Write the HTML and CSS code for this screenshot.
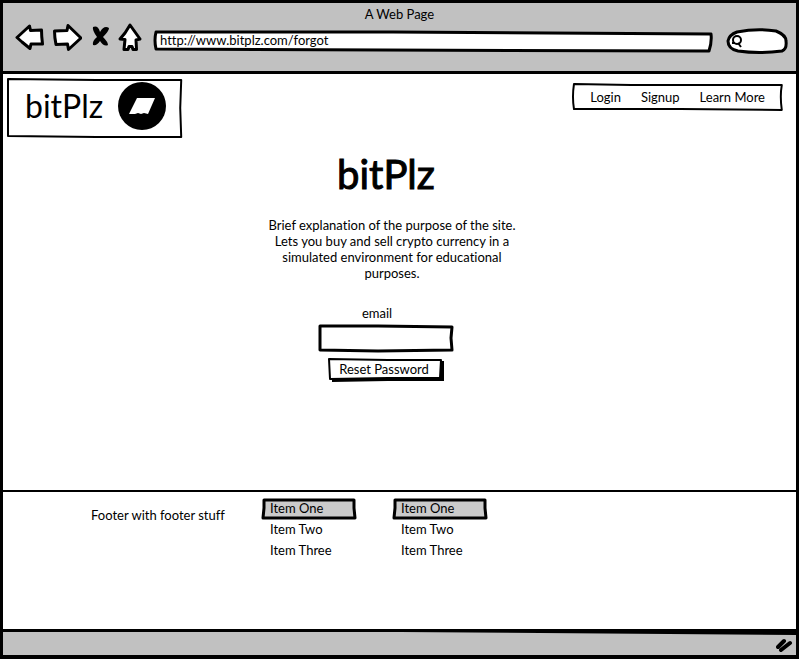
FILE: index.html
```html
<!DOCTYPE html>
<html lang="en">
<head>
<meta charset="utf-8">
<title>A Web Page</title>
<link rel="stylesheet" href="styles.css">
</head>
<body>
<div class="window">
  <header class="chrome">
    <div class="chrome-title">A Web Page</div>
    <div class="toolbar">
      <button class="icon back" type="button" aria-label="Back">
        <svg width="30" height="30" viewBox="0 0 30 30"><path class="shape" d="M2 15.500 L14.500 4 L15.500 8.500 L26.500 8 Q26.500 14 27.500 22 L16 22 L15 26.500 L7 20 Z"/></svg>
      </button>
      <button class="icon forward" type="button" aria-label="Forward">
        <svg width="30" height="30" viewBox="0 0 30 30"><path class="shape" d="M2.500 9 L15 8.500 L16 3.500 L29 16 L16.500 27.500 L15.500 22 L4 22.500 Q2.500 15 2.500 9 Z"/></svg>
      </button>
      <button class="icon stop" type="button" aria-label="Stop">
        <svg width="20" height="30" viewBox="0 0 20 30"><path d="M2 5 Q7 3 9 10 Q13 3 18 6 Q18 9 12 15 Q17 20 17 23 Q13 25 9 19 Q6 24 2 23 Q1 19 6 15 Q1 8 2 5 Z"/></svg>
      </button>
      <button class="icon home" type="button" aria-label="Home">
        <svg width="24" height="30" viewBox="0 0 24 30"><path class="shape" d="M12 3 L22 17 L18 18 L18.500 27.500 L15 27.500 L14 24.500 L11 24.500 L10 27.500 L6 27.500 L7 17.500 L2 17 L7 11 Z"/></svg>
      </button>
      <div class="sketch address">
        <svg class="outline" viewBox="0 0 560 22" preserveAspectRatio="none" aria-hidden="true"><path d="M3 2 L240 2 L558 4 Q559 12 556 21 L230 20 L3 19 Q1 10 3 2 Z"/></svg>
        <input type="text" aria-label="Address" value="http://www.bitplz.com/forgot">
      </div>
      <div class="sketch search">
        <svg class="outline" viewBox="0 0 60 26" preserveAspectRatio="none" aria-hidden="true"><path d="M10 4 Q30 0 49 3 Q59 7 59 13 Q60 21 55 23 Q32 26 11 23 Q1 21 1 13 Q2 7 10 4 Z"/></svg>
        <svg class="lens" width="12" height="14" viewBox="0 0 12 14" aria-hidden="true"><circle cx="7" cy="6" r="4"/><path d="M2 9 L5 9 M8 9 L11 13"/></svg>
        <input type="search" aria-label="Search">
      </div>
    </div>
  </header>

  <div class="site-header">
    <a class="sketch brand" href="#">
      <svg class="outline thin" viewBox="0 0 176 60" preserveAspectRatio="none" aria-hidden="true"><path d="M1 1 L90 2 L175 2 L174 30 L175 59 L90 59 L1 58 L1 30 Z"/></svg>
      <span>bitPlz</span>
      <svg class="mark" width="48" height="48" viewBox="0 0 48 48" aria-hidden="true"><circle cx="24" cy="24" r="24"/><path d="M19 16 L37 16 L30 32 L26 31 L23 32 L20 31 L17 32 L11 32 Z"/></svg>
    </a>
    <nav class="sketch menu">
      <svg class="outline thin" viewBox="0 0 214 28" preserveAspectRatio="none" aria-hidden="true"><path d="M2 1 L60 2 L213 2 Q211 13 213 27 L110 26 L2 26 Q0 14 2 1 Z"/></svg>
      <a href="#">Login</a>
      <a href="#">Signup</a>
      <a href="#">Learn More</a>
    </nav>
  </div>

  <main>
    <h1>bitPlz</h1>
    <p class="intro">Brief explanation of the purpose of the site. Lets you buy and sell crypto currency in a simulated environment for educational purposes.</p>
    <form>
      <label for="email">email</label>
      <div class="sketch field">
        <svg class="outline" viewBox="0 0 136 28" preserveAspectRatio="none" aria-hidden="true"><path d="M2 2 L60 2 L134 3 L133 14 L134 26 L60 27 L2 26 Z"/></svg>
        <input id="email" type="text">
      </div>
      <button class="sketch reset" type="submit">
        <svg class="outline thin" viewBox="0 0 116 24" preserveAspectRatio="none" aria-hidden="true"><path class="shadow" d="M4 20 L112 20 L112 3 L116 3 L116 23 L60 23 L4 24 Z"/><path d="M1 1 L60 2 L113 2 L112 20 L60 20 L2 21 Z"/></svg>
        <span>Reset Password</span>
      </button>
    </form>
  </main>

  <footer>
    <p>Footer with footer stuff</p>
    <ul>
      <li class="sketch current">
        <svg class="outline" viewBox="0 0 94 21" preserveAspectRatio="none" aria-hidden="true"><path d="M2 2 L50 2 L92 2 L92 10 L93 20 L50 20 L1 20 L2 10 Z"/></svg>
        <a href="#">Item One</a></li>
      <li><a href="#">Item Two</a></li>
      <li><a href="#">Item Three</a></li>
    </ul>
    <ul>
      <li class="sketch current">
        <svg class="outline" viewBox="0 0 94 21" preserveAspectRatio="none" aria-hidden="true"><path d="M2 2 L50 2 L92 2 L92 10 L93 20 L50 20 L1 20 L2 10 Z"/></svg>
        <a href="#">Item One</a></li>
      <li><a href="#">Item Two</a></li>
      <li><a href="#">Item Three</a></li>
    </ul>
  </footer>

  <div class="status">
    <svg class="wedge" viewBox="0 0 100 3" preserveAspectRatio="none" aria-hidden="true"><path d="M0 0 L100 0 L100 3 Z"/></svg>
    <svg class="grip" width="18" height="16" viewBox="0 0 18 16" aria-hidden="true"><path d="M2 9 L8 3 M5 12 L14 5"/></svg>
  </div>
</div>
</body>
</html>
```
FILE: styles.css
```css
* {
  box-sizing: border-box;
}

body {
  margin: 0;
  background: #fff;
  color: #000;
  font: 13px/16px Lato, "Liberation Sans", sans-serif;
  font-variant-ligatures: none;
}

a {
  color: inherit;
  text-decoration: none;
}

input,
button {
  border: 0;
  padding: 0;
  background: none;
  color: inherit;
  font: inherit;
  outline: 0;
}

.window {
  display: flex;
  flex-direction: column;
  min-height: 100vh;
  border: solid #000;
  border-width: 3px 3px 4px;
}

/* Hand-drawn outlines stretch with the box that they surround. */
.sketch {
  position: relative;
}

.sketch > * {
  position: relative;
}

.sketch > .outline {
  position: absolute;
  inset: 0;
  width: 100%;
  height: 100%;
  overflow: visible;
  fill: #fff;
  stroke: #000;
  stroke-width: 3px;
  stroke-linejoin: round;
}

.sketch > .thin {
  stroke-width: 2px;
}

.chrome {
  padding-top: 3px;
  height: 71px;
  background: #c1c1c1;
  border-bottom: 3px solid #000;
}

.chrome-title {
  text-align: center;
}

.toolbar {
  display: flex;
  align-items: flex-start;
  padding: 0 9px 0 12px;
}

.icon {
  display: flex;
}

.forward {
  margin-left: 7px;
}

.stop {
  margin-left: 9px;
}

.home {
  margin-left: 7px;
}

.shape {
  fill: #fff;
  stroke: #000;
  stroke-width: 3px;
  stroke-linejoin: round;
}

.address {
  flex: 1;
  height: 22px;
  margin: 8px 14px 0 11px;
}

.address input {
  display: block;
  width: 100%;
  height: 20px;
  padding-left: 7px;
}

.search {
  display: flex;
  align-items: center;
  width: 60px;
  height: 26px;
  margin-top: 6px;
  padding-left: 3px;
}

.search input {
  flex: 1;
  min-width: 0;
}

.lens {
  fill: none;
  stroke: #000;
  stroke-width: 2px;
}

.site-header {
  display: flex;
  justify-content: space-between;
  align-items: flex-start;
  padding: 4px 13px 0 4px;
}

.brand {
  display: flex;
  align-items: center;
  gap: 15px;
  height: 60px;
  padding: 0 16px 4px 18px;
  font-size: 32px;
}

.mark path {
  fill: #fff;
}

.menu {
  display: flex;
  gap: 20px;
  height: 28px;
  margin-top: 5px;
  padding: 6px 18px;
}

main {
  flex: 1;
  display: flex;
  flex-direction: column;
  align-items: center;
  padding: 12px 27px 0 0;
}

h1 {
  margin: 0;
  font-size: 40px;
  line-height: 48px;
  font-weight: 400;
  -webkit-text-stroke: 1px #000;
}

.intro {
  width: 260px;
  margin: 19px 0 24px 12px;
  text-align: center;
}

form {
  display: flex;
  flex-direction: column;
  align-items: center;
}

label {
  margin-right: 18px;
}

.field {
  width: 136px;
  height: 28px;
  margin: 3px 0 6px;
}

.field input {
  width: 100%;
  height: 100%;
  padding: 0 6px;
}

.reset {
  width: 116px;
  height: 24px;
  padding: 0 4px 2px 0;
}

.reset .shadow {
  fill: #000;
  stroke: none;
}

footer {
  display: flex;
  align-items: flex-start;
  min-height: 139px;
  padding: 6px 0 0 88px;
  border-top: 2px solid #000;
}

footer p {
  width: 137px;
  margin: 9px 0 0;
}

ul {
  width: 94px;
  margin: 0 0 0 34px;
  padding: 0;
  list-style: none;
}

ul + ul {
  margin-left: 37px;
}

li {
  padding: 2px 8px;
  line-height: 17px;
}

.current > .outline {
  fill: #cbcbcb;
}

.status {
  display: flex;
  justify-content: flex-end;
  position: relative;
  height: 26px;
  padding: 6px 2px 0 0;
  background: #c1c1c1;
  border-top: 3px solid #000;
}

.wedge {
  position: absolute;
  top: 0;
  right: 0;
  width: 50%;
  height: 3px;
}

.grip {
  stroke: #000;
  stroke-width: 4px;
  stroke-linecap: round;
}
```
